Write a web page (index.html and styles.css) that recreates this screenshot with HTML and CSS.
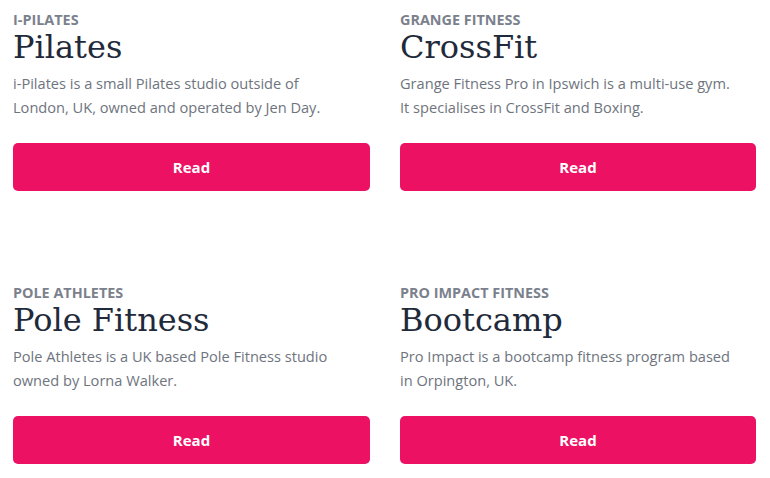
FILE: index.html
```html
<!DOCTYPE html>
<html lang="en">
<head>
    <meta charset="UTF-8">
    <meta name="viewport" content="width=device-width, initial-scale=1.0">
    <title>Classes</title>
    <link rel="stylesheet" href="styles.css">
</head>
<body>
    <div class="grid">
        <div class="card">
            <div class="studio">I-PILATES</div>
            <h2>Pilates</h2>
            <p>i-Pilates is a small Pilates studio outside of<br>London, UK, owned and operated by Jen Day.</p>
            <button>Read</button>
        </div>
        <div class="card">
            <div class="studio">GRANGE FITNESS</div>
            <h2>CrossFit</h2>
            <p>Grange Fitness Pro in Ipswich is a multi-use gym.<br>It specialises in CrossFit and Boxing.</p>
            <button>Read</button>
        </div>
        <div class="card">
            <div class="studio">POLE ATHLETES</div>
            <h2>Pole Fitness</h2>
            <p>Pole Athletes is a UK based Pole Fitness studio<br>owned by Lorna Walker.</p>
            <button>Read</button>
        </div>
        <div class="card">
            <div class="studio">PRO IMPACT FITNESS</div>
            <h2>Bootcamp</h2>
            <p>Pro Impact is a bootcamp fitness program based<br>in Orpington, UK.</p>
            <button>Read</button>
        </div>
    </div>
</body>
</html>
```

FILE: styles.css
```css
body {
    font-family: "Open Sans", Arial, sans-serif;
    margin: 0;
    padding: 0;
    background: #fff;
}
.grid {
    display: grid;
    grid-template-columns: 357px 356px;
    column-gap: 30px;
    row-gap: 92px;
    padding: 10px 0 0 13px;
}
.studio {
    font-size: 14.4px;
    line-height: 20px;
    font-weight: 700;
    color: #7b818c;
}
h2 {
    font-family: "DejaVu Serif", serif;
    font-weight: 400;
    font-size: 32px;
    line-height: 35px;
    color: #1f2a3b;
    margin: 0;
}
p {
    font-size: 14.6px;
    line-height: 24px;
    color: #6e747e;
    margin: 6px 0 24px;
}
button {
    display: block;
    width: 100%;
    height: 48px;
    font-family: "Open Sans", Arial, sans-serif;
    font-size: 15px;
    font-weight: 700;
    background-color: #ed1163;
    color: white;
    border: none;
    border-radius: 5px;
    cursor: pointer;
}
```
